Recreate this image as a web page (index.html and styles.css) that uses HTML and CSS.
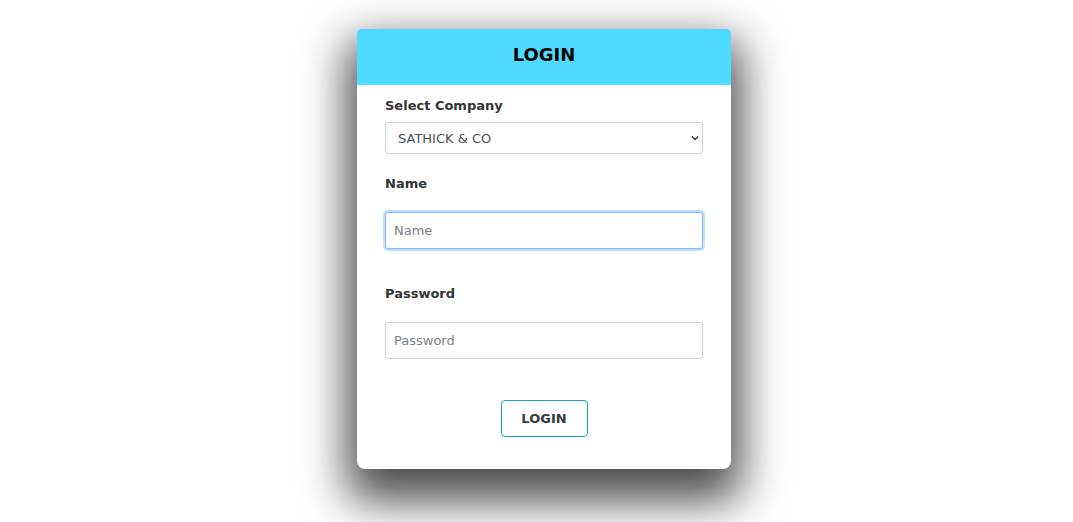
FILE: index.html
```html
<!DOCTYPE html>
<html lang="en">
<head>
    <meta charset="UTF-8">
    <meta name="viewport" content="width=device-width, initial-scale=1.0">
    <title>Login</title>
    <link rel="stylesheet" href="styles.css">
</head>
<body>
    <div class="login-card">
        <div class="login-header">LOGIN</div>
        <div class="login-body">
            <label class="field-label first" for="company">Select Company</label>
            <div class="select-wrap">
                <select id="company" class="field-select">
                    <option>SATHICK &amp; CO</option>
                </select>
                <svg class="select-arrow" width="8" height="6" viewBox="0 0 8 6"><path d="M1 1.5 L4 4.5 L7 1.5" fill="none" stroke="#333" stroke-width="1.5"/></svg>
            </div>

            <label class="field-label" for="name">Name</label>
            <input type="text" id="name" class="field-input focused" placeholder="Name">

            <label class="field-label spaced" for="password">Password</label>
            <input type="password" id="password" class="field-input" placeholder="Password">

            <div class="actions">
                <button class="login-btn">LOGIN</button>
            </div>
        </div>
    </div>
</body>
</html>
```

FILE: styles.css
```css
body {
    font-family: "DejaVu Sans", Verdana, sans-serif;
    margin: 0;
    padding: 0;
    background-color: #fff;
    height: 522px;
    overflow: hidden;
}
.login-card {
    width: 374px;
    margin: 29px 0 0 357px;
    background-color: #fff;
    border-radius: 4px 4px 8px 8px;
    box-shadow: 0 22px 45px 10px rgba(0, 0, 0, 0.7);
    overflow: hidden;
}
.login-header {
    height: 56px;
    line-height: 52px;
    background-color: #4fdbff;
    color: #000;
    text-align: center;
    font-weight: bold;
    font-size: 18px;
}
.login-body {
    padding: 0 28px 32px 28px;
}
.field-label {
    display: block;
    font-size: 13px;
    font-weight: bold;
    color: #333;
    margin: 22px 0 20px 0;
    line-height: 16px;
}
.field-label.first {
    margin: 13px 0 8px 0;
}
.field-label.spaced {
    margin-top: 37px;
}
.select-wrap {
    position: relative;
}
.field-select {
    width: 318px;
    height: 32px;
    padding: 0 0 0 12px;
    border: 1px solid #ced4da;
    border-radius: 3px;
    background-color: #fff;
    color: #495057;
    font-family: inherit;
    font-size: 13px;
    appearance: none;
    -webkit-appearance: none;
    outline: none;
}
.select-arrow {
    position: absolute;
    right: 4px;
    top: 13px;
}
.field-input {
    display: block;
    box-sizing: border-box;
    width: 318px;
    height: 37px;
    padding: 0 8px;
    border: 1px solid #ced4da;
    border-radius: 3px;
    font-family: inherit;
    font-size: 13px;
    color: #495057;
    outline: none;
}
.field-input::placeholder {
    color: #7b8088;
}
.field-input.focused {
    border-color: #80bdff;
    box-shadow: 0 0 0 2px rgba(0, 123, 255, 0.25);
}
.actions {
    text-align: center;
    margin-top: 41px;
}
.login-btn {
    width: 87px;
    height: 37px;
    background-color: #fff;
    border: 1px solid #17a2b8;
    border-radius: 4px;
    color: #343a40;
    font-family: inherit;
    font-weight: bold;
    font-size: 13px;
    cursor: pointer;
}
```
